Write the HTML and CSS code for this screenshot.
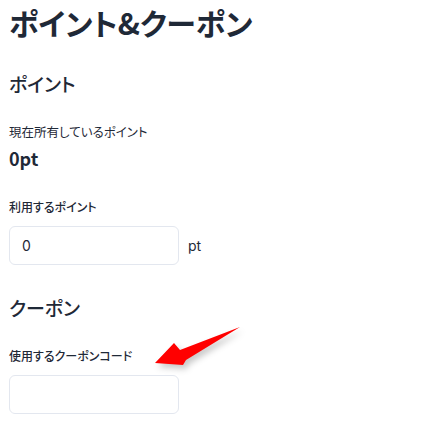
FILE: index.html
```html
<!DOCTYPE html>
<html lang="ja">
<head>
<meta charset="utf-8">
<title>ポイント&クーポン</title>
<link rel="stylesheet" href="styles.css">
</head>
<body>
<main class="page">
  <h1 class="title">ポイント&amp;クーポン</h1>

  <section class="section section-points">
    <h2 class="section-title">ポイント</h2>
    <p class="caption">現在所有しているポイント</p>
    <p class="balance">0pt</p>
    <label class="field-label" for="use-points">利用するポイント</label>
    <div class="field-row">
      <input id="use-points" class="text-input" type="text" value="0">
      <span class="unit">pt</span>
    </div>
  </section>

  <section class="section section-coupon">
    <h2 class="section-title">クーポン</h2>
    <label class="field-label" for="coupon-code">使用するクーポンコード</label>
    <div class="field-row">
      <input id="coupon-code" class="text-input" type="text" value="">
    </div>
  </section>

  <svg class="arrow" width="110" height="60" viewBox="0 0 110 60" aria-hidden="true">
    <polygon points="5,41 24,21 30,28 90,5 36,38 33,43" fill="#ff0000"/>
  </svg>
</main>
</body>
</html>
```

FILE: styles.css
```css
* { box-sizing: border-box; }

html, body {
  margin: 0;
  padding: 0;
  background: #ffffff;
}

body {
  font-family: "Noto Sans CJK JP", "Noto Sans", sans-serif;
  font-feature-settings: "palt";
  color: #1f2937;
}

.page {
  position: relative;
  padding: 0 9px;
}

.title {
  margin: 0;
  font-size: 30px;
  line-height: 44px;
  font-weight: 700;
}

.section {
  display: flex;
  flex-direction: column;
  align-items: flex-start;
}

.section-points { margin-top: 26px; }
.section-coupon { margin-top: 29px; }

.section-title {
  margin: 0 0 25px;
  font-size: 19px;
  line-height: 28px;
  font-weight: 500;
}

.caption {
  margin: 0 0 4px;
  font-size: 12.5px;
  line-height: 18px;
  font-weight: 400;
}

.balance {
  margin: 0 0 27px;
  font-size: 18px;
  line-height: 26px;
  font-weight: 700;
}

.field-label {
  display: block;
  margin: 0 0 10px;
  font-size: 12px;
  line-height: 18px;
  font-weight: 500;
}

.field-row {
  display: flex;
  align-items: center;
  gap: 9px;
}

.text-input {
  width: 170px;
  height: 39px;
  margin: 0;
  padding: 0 12px;
  border: 1px solid #e3e7ef;
  border-radius: 6px;
  background: #ffffff;
  font-family: "Inter", "Noto Sans", sans-serif;
  font-size: 14px;
  color: #1f2937;
  outline: none;
}

.unit {
  font-family: "Inter", "Noto Sans", sans-serif;
  font-size: 14px;
  color: #1f2937;
}

.arrow {
  position: absolute;
  left: 150px;
  top: 322px;
  overflow: visible;
  filter: drop-shadow(3px 4px 3px rgba(0, 0, 0, 0.22));
}
```
